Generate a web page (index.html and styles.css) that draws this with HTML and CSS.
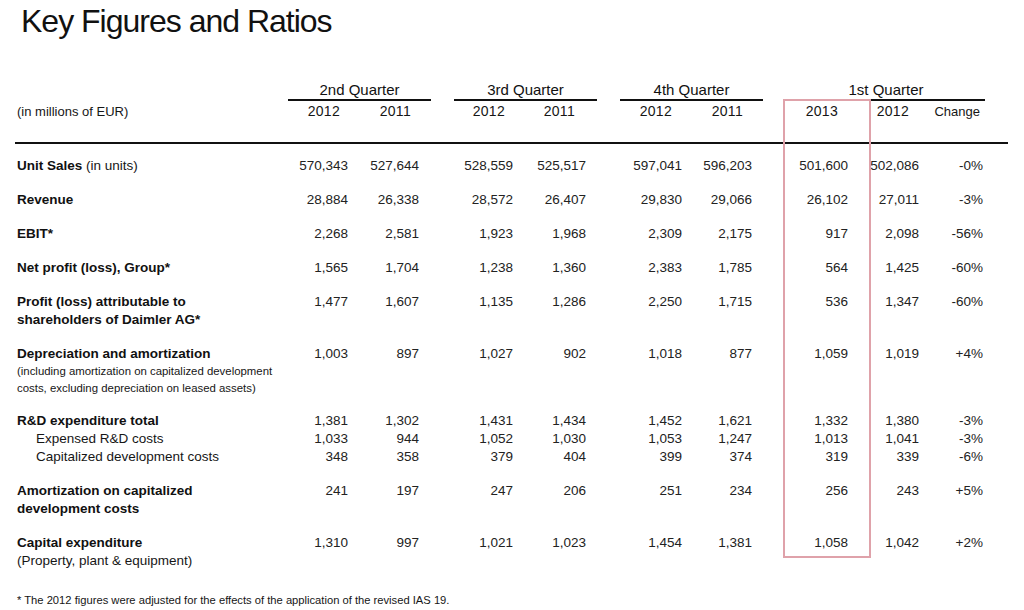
FILE: index.html
```html
<!DOCTYPE html>
<html lang="en">
<head>
<meta charset="utf-8">
<title>Key Figures and Ratios</title>
<link rel="stylesheet" href="styles.css">
</head>
<body>
<div class="page">
  <h1 class="title">Key Figures and Ratios</h1>

  <div class="table">
    <div class="head">
      <div class="cols qrow">
        <div class="q q2">2nd Quarter</div>
        <div class="q q3">3rd Quarter</div>
        <div class="q q4">4th Quarter</div>
        <div class="q q1">1st Quarter</div>
      </div>
      <div class="cols yrow">
        <div class="unit">(in millions of EUR)</div>
        <div>2012</div><div>2011</div>
        <div>2012</div><div>2011</div>
        <div>2012</div><div>2011</div>
        <div>2013</div><div>2012</div><div class="chg">Change</div>
      </div>
    </div>

    <div class="rows">
      <div class="cols row">
        <div class="lbl"><b>Unit Sales</b> (in units)</div>
        <div>570,343</div><div>527,644</div><div>528,559</div><div>525,517</div><div>597,041</div><div>596,203</div><div>501,600</div><div>502,086</div><div>-0%</div>
      </div>
      <div class="cols row">
        <div class="lbl"><b>Revenue</b></div>
        <div>28,884</div><div>26,338</div><div>28,572</div><div>26,407</div><div>29,830</div><div>29,066</div><div>26,102</div><div>27,011</div><div>-3%</div>
      </div>
      <div class="cols row">
        <div class="lbl"><b>EBIT*</b></div>
        <div>2,268</div><div>2,581</div><div>1,923</div><div>1,968</div><div>2,309</div><div>2,175</div><div>917</div><div>2,098</div><div>-56%</div>
      </div>
      <div class="cols row">
        <div class="lbl"><b>Net profit (loss), Group*</b></div>
        <div>1,565</div><div>1,704</div><div>1,238</div><div>1,360</div><div>2,383</div><div>1,785</div><div>564</div><div>1,425</div><div>-60%</div>
      </div>
      <div class="cols row">
        <div class="lbl"><b>Profit (loss) attributable to<br>shareholders of Daimler AG*</b></div>
        <div>1,477</div><div>1,607</div><div>1,135</div><div>1,286</div><div>2,250</div><div>1,715</div><div>536</div><div>1,347</div><div>-60%</div>
      </div>
      <div class="cols row">
        <div class="lbl"><b>Depreciation and amortization</b><span class="note">(including amortization on capitalized development<br>costs, excluding depreciation on leased assets)</span></div>
        <div>1,003</div><div>897</div><div>1,027</div><div>902</div><div>1,018</div><div>877</div><div>1,059</div><div>1,019</div><div>+4%</div>
      </div>
      <div class="block">
        <div class="cols row">
          <div class="lbl"><b>R&amp;D expenditure total</b></div>
          <div>1,381</div><div>1,302</div><div>1,431</div><div>1,434</div><div>1,452</div><div>1,621</div><div>1,332</div><div>1,380</div><div>-3%</div>
        </div>
        <div class="cols row">
          <div class="lbl sub">Expensed R&amp;D costs</div>
          <div>1,033</div><div>944</div><div>1,052</div><div>1,030</div><div>1,053</div><div>1,247</div><div>1,013</div><div>1,041</div><div>-3%</div>
        </div>
        <div class="cols row">
          <div class="lbl sub">Capitalized development costs</div>
          <div>348</div><div>358</div><div>379</div><div>404</div><div>399</div><div>374</div><div>319</div><div>339</div><div>-6%</div>
        </div>
      </div>
      <div class="cols row">
        <div class="lbl"><b>Amortization on capitalized<br>development costs</b></div>
        <div>241</div><div>197</div><div>247</div><div>206</div><div>251</div><div>234</div><div>256</div><div>243</div><div>+5%</div>
      </div>
      <div class="cols row">
        <div class="lbl"><b>Capital expenditure</b><br>(Property, plant &amp; equipment)</div>
        <div>1,310</div><div>997</div><div>1,021</div><div>1,023</div><div>1,454</div><div>1,381</div><div>1,058</div><div>1,042</div><div>+2%</div>
      </div>
    </div>

    <p class="foot">* The 2012 figures were adjusted for the effects of the application of the revised IAS 19.</p>
  </div>

  <div class="highlight"></div>
</div>
</body>
</html>
```

FILE: styles.css
```css
html, body {
  margin: 0;
  padding: 0;
  background: #ffffff;
}

body {
  font-family: "Liberation Sans", Arial, sans-serif;
  color: #161616;
  width: 1024px;
  height: 610px;
  overflow: hidden;
}

.page {
  position: relative;
  height: 610px;
}

.title {
  margin: 0;
  padding: 3px 0 0 21px;
  font-size: 32px;
  line-height: 36px;
  font-weight: normal;
  letter-spacing: -1px;
  color: #111;
}

.table {
  margin: 42px 0 0 15px;
  width: 993px;
}

.cols {
  display: grid;
  grid-template-columns: 273px 60px 83px 82px 84px 85px 81px 85px 71px 66px;
}

.head {
  border-bottom: 2px solid #111;
  padding-bottom: 22px;
}

.qrow .q {
  font-size: 15px;
  line-height: 18px;
  text-align: center;
  border-bottom: 2px solid #111;
  color: #111;
}

.q2 { grid-column: 2 / 4; }
.q3 { grid-column: 4 / 6; margin-left: 23px; }
.q4 { grid-column: 6 / 8; margin-left: 23px; }
.q1 { grid-column: 8 / 11; margin-left: 24px; }

.yrow {
  margin-top: 2px;
  font-size: 14px;
  line-height: 16px;
  align-items: baseline;
  letter-spacing: 0.3px;
}

.yrow > div { text-align: right; }
.yrow > .unit {
  text-align: left;
  padding-left: 2px;
  font-size: 13px;
  letter-spacing: 0;
}
.yrow > :nth-child(2) { padding-right: 8px; }
.yrow > :nth-child(3) { padding-right: 20px; }
.yrow > :nth-child(4) { padding-right: 8px; }
.yrow > :nth-child(5) { padding-right: 22px; }
.yrow > :nth-child(6) { padding-right: 10px; }
.yrow > :nth-child(7) { padding-right: 20px; }
.yrow > :nth-child(8) { padding-right: 10px; }
.yrow > :nth-child(9) { padding-right: 10px; }
.yrow > .chg { padding-right: 5px; font-size: 13px; letter-spacing: 0; }

.rows {
  display: flex;
  flex-direction: column;
  gap: 16px;
  padding-top: 13px;
}

.row {
  font-size: 13.5px;
  line-height: 18px;
  align-items: start;
}

.row > div {
  text-align: right;
  color: #222;
}

.row > .lbl {
  text-align: left;
  padding-left: 2px;
  color: #161616;
}

.row > :nth-child(3) { padding-right: 12px; }
.row > :nth-child(5) { padding-right: 11px; }
.row > :nth-child(7) { padding-right: 11px; }
.row > :nth-child(10) { padding-right: 2px; }

.lbl b { font-weight: bold; color: #111; }

.lbl.sub { padding-left: 21px; }

.note {
  display: block;
  font-size: 11.4px;
  line-height: 16.5px;
}

.foot {
  margin: 23px 0 0 2px;
  font-size: 11.2px;
  line-height: 14px;
  color: #161616;
}

.highlight {
  position: absolute;
  left: 783px;
  top: 99px;
  width: 88px;
  height: 459px;
  box-sizing: border-box;
  border: 2px solid #dfa2aa;
}
```
